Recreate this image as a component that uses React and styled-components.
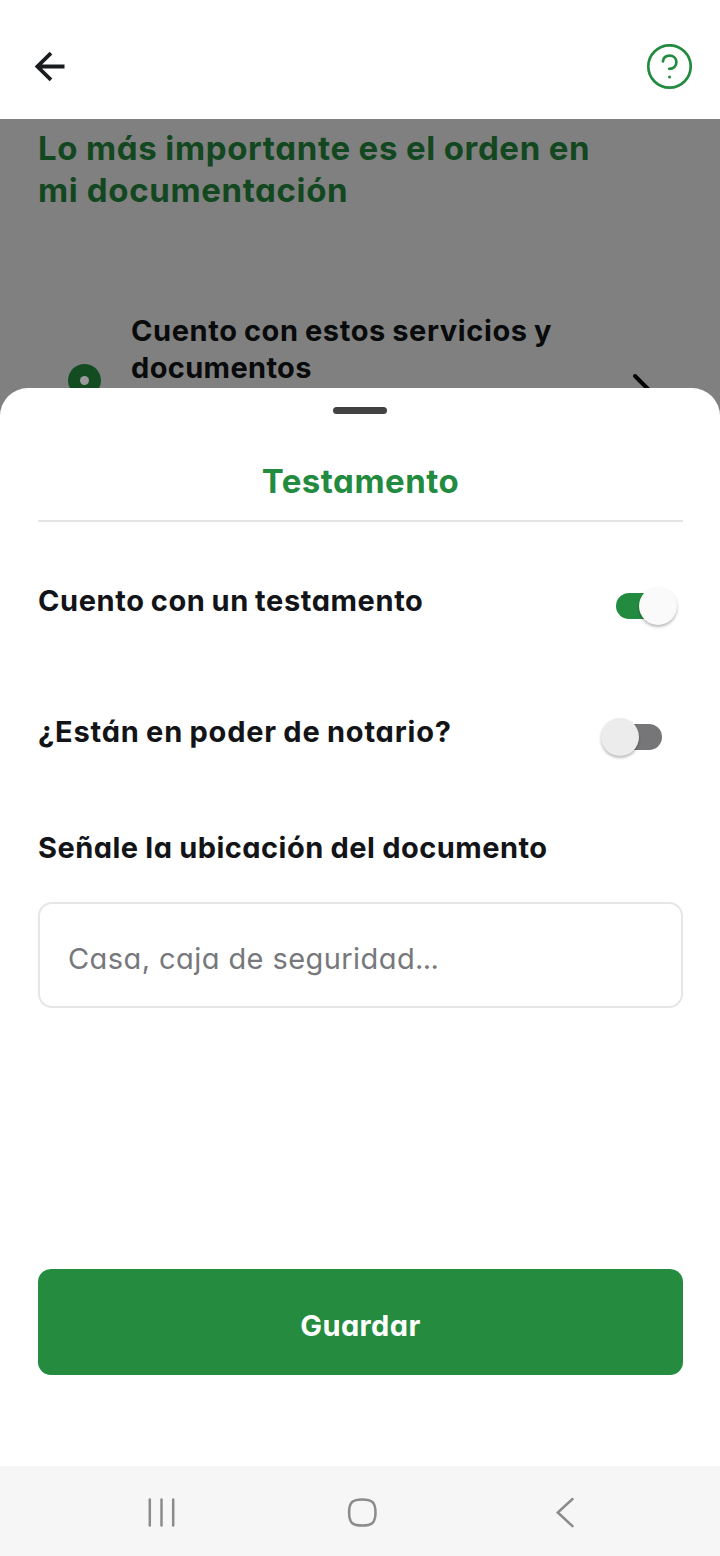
import React from 'react';
import styled, { createGlobalStyle } from 'styled-components';

const Global = createGlobalStyle`
  * { box-sizing: border-box; }
  body { margin: 0; background: #fff; font-family: Inter, "Liberation Sans", sans-serif; font-feature-settings: "cv11" 1; }
  h1, h2, p { margin: 0; }
`;
const Screen = styled.main`
  width: 720px; height: 1556px; display: flex; flex-direction: column;
  background: #fff; overflow: hidden; color: #121417;
`;
const Header = styled.header`
  height: 119px; flex: none; display: flex; justify-content: space-between;
  padding: 44px 28px 0 34px;
`;
const Backdrop = styled.section`
  height: 297px; flex: none; background: #808080; padding: 8px 38px 0; overflow: hidden;
`;
const Line = styled.span`
  display: block; width: max-content; white-space: nowrap;
  font-size: ${p => p.$size}px; line-height: ${p => p.$lh}px;
  font-weight: ${p => p.$weight || 650}; letter-spacing: ${p => p.$ls || 0}px; word-spacing: ${p => p.$ws || 0}px;
`;
const PageTitle = styled.h1`color: #124720; font-weight: inherit;`;
const ServiceRow = styled.div`
  margin-top: 101px; display: flex; color: #090a0b;
`;
const Dot = styled.svg`margin: 52px 30px 0 30px; flex: none;`;
const ServiceText = styled.div`flex: 1;`;
const Chevron = styled.svg`margin: 61px 30px 0 0; flex: none;`;
const Sheet = styled.section`
  margin-top: -28px; flex: 1; background: #fff; border-radius: 28px 28px 0 0;
  padding: 19px 37px 0 38px; display: flex; flex-direction: column; position: relative;
`;
const Handle = styled.div`width: 54px; height: 7px; border-radius: 4px; background: #424242; align-self: center; margin-right: 1px; flex: none;`;
const SheetTitle = styled.h2`
  color: #238b40; height: 108px; flex: none; border-bottom: 2px solid #e4e4e4;
  display: flex; justify-content: center; padding-top: 46px; font-weight: inherit;
`;
const Row = styled.div`
  display: flex; justify-content: space-between; flex: none; height: 42px; margin-top: ${p => p.$top}px;
`;
const Switch = styled.div`
  width: 61px; height: 40px; display: flex; align-items: center; margin: 6px ${p => p.$on ? 6 : 21}px 0 0;
  flex-direction: ${p => p.$on ? 'row' : 'row-reverse'};
`;
const Track = styled.div`width: 45px; height: 26px; border-radius: 13px; flex: none; background: ${p => p.$on ? '#238b40' : '#767577'};`;
const Thumb = styled.div`
  width: 38px; height: 38px; border-radius: 50%; flex: none; background: ${p => p.$on ? '#fafafa' : '#ececec'}; z-index: 1;
  margin: ${p => p.$on ? '0 0 0 -22px' : '0 -22px 0 0'}; box-shadow: 0 2px 3px rgba(0,0,0,.28);
`;
const Label = styled.div`margin-top: 76px;`;
const Field = styled.div`
  margin-top: 36px; height: 106px; flex: none; border: 2px solid #e6e6e6; border-radius: 14px;
  display: flex; align-items: center; padding: 6px 28px 0; color: #77787c;
`;
const Ellipsis = styled.span`letter-spacing: -0.6px;`;
const Save = styled.button`
  margin-top: 261px; height: 106px; flex: none; border: 0; border-radius: 13px; background: #258b3f; color: #fff;
  display: flex; align-items: center; justify-content: center; padding: 7px 0 0; font-family: inherit; font-feature-settings: inherit;
`;
const NavBar = styled.nav`
  height: 90px; flex: none; background: #f6f6f6; display: flex; padding: 30px 0 0 146px;
`;
const NavIcon = styled.svg`margin-right: 170px; flex: none; fill: none; stroke: #8b8b8b; stroke-width: 2.5; stroke-linecap: round;`;

export default function App() {
  return <Screen><Global />
    <Header>
      <svg width="32" height="45" viewBox="0 0 32 45" fill="none" stroke="#191c1e" strokeWidth="3.8"><path d="M30.5 22.5H3M17 9.2 3.4 22.5 17 35.8" /></svg>
      <svg width="46" height="46" viewBox="0 0 46 46" fill="none" stroke="#238b40" strokeWidth="2.7" strokeLinecap="round"><circle cx="23.5" cy="22.5" r="21.2"/><path d="M16.9 17.4c.5-3.9 3.3-5.8 6.6-5.8 4 0 6.9 2.8 6.9 6.5 0 3.9-2.9 6.7-7.1 6.7"/><circle cx="23.5" cy="33" r="1.5" fill="#238b40" stroke="none"/></svg>
    </Header>
    <Backdrop>
      <PageTitle><Line $size={33} $lh={42} $ls={0.68} $ws={-0.7}>Lo más importante es el orden en</Line><Line $size={33} $lh={42} $ls={0.65}>mi documentación</Line></PageTitle>
      <ServiceRow>
        <Dot width="33" height="33"><circle cx="16.5" cy="16.5" r="16.5" fill="#124c20"/><circle cx="16.5" cy="16.5" r="4.5" fill="#9a9a9a"/></Dot>
        <ServiceText><Line $size={29} $lh={37} $ls={0.6} $ws={-1.1}>Cuento con estos servicios y</Line><Line $size={29} $lh={37} $ls={0.35}>documentos</Line></ServiceText>
        <Chevron width="20" height="34" fill="none" stroke="#000" strokeWidth="4" strokeLinecap="round"><path d="m3 3 14 14L3 31"/></Chevron>
      </ServiceRow>
    </Backdrop>
    <Sheet>
      <Handle/>
      <SheetTitle><Line $size={33} $lh={42} $ls={0.5}>Testamento</Line></SheetTitle>
      <Row $top={58}><Line $size={29} $lh={42} $ls={0.6} $ws={-1.3}>Cuento con un testamento</Line><Switch $on><Track $on/><Thumb $on/></Switch></Row>
      <Row $top={89}><Line $size={29} $lh={42} $ls={0.82} $ws={-1.3}>¿Están en poder de notario?</Line><Switch><Track/><Thumb/></Switch></Row>
      <Label><Line $size={29} $lh={37} $ls={0.45} $ws={-0.4}>Señale la ubicación del documento</Line></Label>
      <Field><Line $size={29} $lh={37} $weight={400} $ls={0.42}>Casa, caja de seguridad<Ellipsis>...</Ellipsis></Line></Field>
      <Save><Line $size={29} $lh={37} $ls={0.4}>Guardar</Line></Save>
    </Sheet>
    <NavBar>
      <NavIcon width="31" height="32"><path d="M3.8 3.5v26M15.5 3.5v26M27.2 3.5v26"/></NavIcon>
      <NavIcon width="31" height="32"><path d="M15.2 3.4c9.5 0 13.3 2.5 13.3 13.1s-3.8 13.1-13.3 13.1S2.1 27.1 2.1 16.5 5.7 3.4 15.2 3.4Z"/></NavIcon>
      <NavIcon width="31" height="32"><path d="M24.5 3 9.8 16.5l14.7 13.7"/></NavIcon>
    </NavBar>
  </Screen>;
}
